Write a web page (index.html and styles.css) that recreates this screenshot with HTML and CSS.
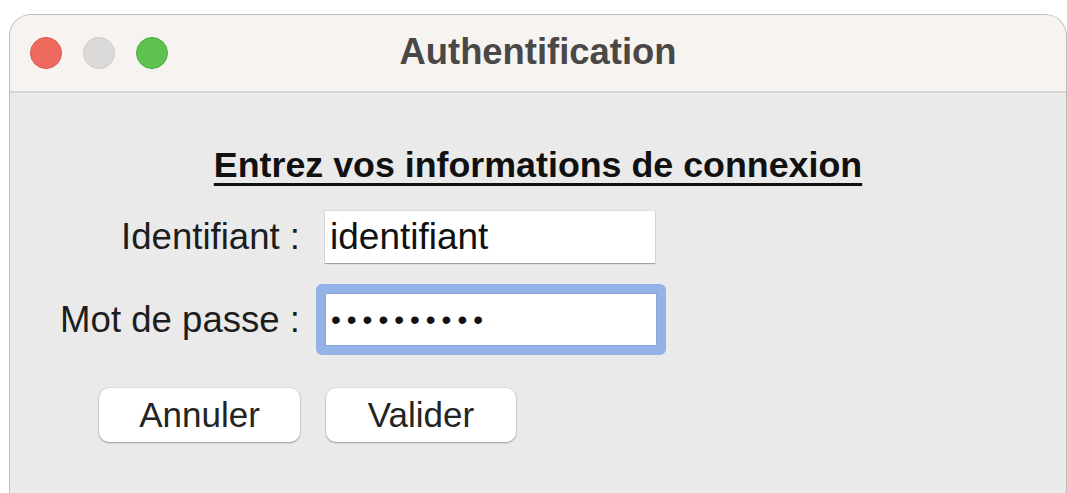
FILE: index.html
```html
<!DOCTYPE html>
<html lang="fr">
<head>
<meta charset="utf-8">
<title>Authentification</title>
<link rel="stylesheet" href="styles.css">
</head>
<body>
  <div class="window">
    <header class="titlebar">
      <div class="lights">
        <span class="light light-close"></span>
        <span class="light light-min"></span>
        <span class="light light-max"></span>
      </div>
      <h1 class="title">Authentification</h1>
      <div class="spacer"></div>
    </header>
    <main class="content">
      <h2 class="heading">Entrez vos informations de connexion</h2>
      <form class="form">
        <label class="label" for="login">Identifiant :</label>
        <input class="field" id="login" type="text" value="identifiant" readonly>
        <label class="label" for="pass">Mot de passe :</label>
        <input class="field field-focus" id="pass" type="password" value="abcdefghij" readonly>
        <div class="cell-right"><button type="button" class="btn btn-cancel">Annuler</button></div>
        <div class="cell-left"><button type="button" class="btn btn-ok">Valider</button></div>
      </form>
    </main>
  </div>
</body>
</html>
```

FILE: styles.css
```css
html, body {
  margin: 0;
  padding: 0;
  height: 100%;
  background: #ffffff;
  overflow: hidden;
}

body {
  font-family: "Liberation Sans", Arial, sans-serif;
}

.window {
  margin: 14px 0 0 9px;
  height: calc(100vh - 14px);
  box-sizing: border-box;
  border: 1px solid #bfbdbd;
  border-bottom: 0;
  border-radius: 22px 22px 0 0;
  background: #eaeaea;
  overflow: hidden;
}

.titlebar {
  height: 76px;
  background: #f6f3f1;
  border-bottom: 2px solid #d7d5d4;
  display: grid;
  grid-template-columns: 1fr auto 1fr;
  align-items: center;
}

.lights {
  display: flex;
  gap: 21px;
  padding-left: 20px;
}

.light {
  width: 32px;
  height: 32px;
  border-radius: 50%;
  box-sizing: border-box;
}

.light-close {
  background: #ee6a5e;
  border: 1px solid #e0574c;
}

.light-min {
  background: #dcdad8;
  border: 1px solid #cdcbc9;
}

.light-max {
  background: #5dc24f;
  border: 1px solid #4fb03f;
}

.title {
  margin: 0;
  font-size: 36.4px;
  font-weight: bold;
  color: #4a4747;
  line-height: 40px;
  padding-bottom: 3px;
}

.content {
  padding-top: 52px;
}

.heading {
  margin: 0;
  text-align: center;
  font-size: 35.8px;
  font-weight: bold;
  line-height: 40px;
  color: #111111;
  text-decoration: underline;
  text-decoration-thickness: 3px;
  text-underline-offset: 6px;
}

.form {
  display: grid;
  grid-template-columns: 290px 340px;
  grid-template-rows: 52px 53px 54px;
  column-gap: 25px;
  row-gap: 30px;
  margin-top: 26px;
}

.label {
  justify-self: end;
  align-self: center;
  font-size: 36.6px;
  color: #1d1d1d;
  line-height: 40px;
}

.field {
  width: 330px;
  height: 52px;
  box-sizing: border-box;
  margin: 0;
  padding: 0 0 0 5px;
  border: 0;
  outline: none;
  background: #ffffff;
  font-family: "Liberation Sans", Arial, sans-serif;
  font-size: 37px;
  color: #111111;
  box-shadow: 0 1px 1px rgba(0, 0, 0, 0.28), 0 0 0 1px rgba(0, 0, 0, 0.04);
}

.field-focus {
  width: 350px;
  height: 71px;
  margin: -9px 0 0 -9px;
  border: 9px solid #93b3e8;
  border-radius: 6px;
  padding-left: 6px;
  letter-spacing: 6px;
  font-size: 28px;
  box-shadow: inset 0 0 0 1px #86a6dc;
}

.cell-right {
  justify-self: end;
  margin-top: 12px;
}

.cell-left {
  margin-top: 12px;
  margin-left: 1px;
}

.btn {
  height: 54px;
  border: 0;
  border-radius: 10px;
  background: #ffffff;
  font-family: "Liberation Sans", Arial, sans-serif;
  font-size: 35px;
  color: #242424;
  padding: 0;
  box-shadow: 0 1px 2px rgba(0, 0, 0, 0.3), 0 0 0 1px rgba(0, 0, 0, 0.05);
}

.btn-cancel {
  width: 201px;
}

.btn-ok {
  width: 190px;
}
```
